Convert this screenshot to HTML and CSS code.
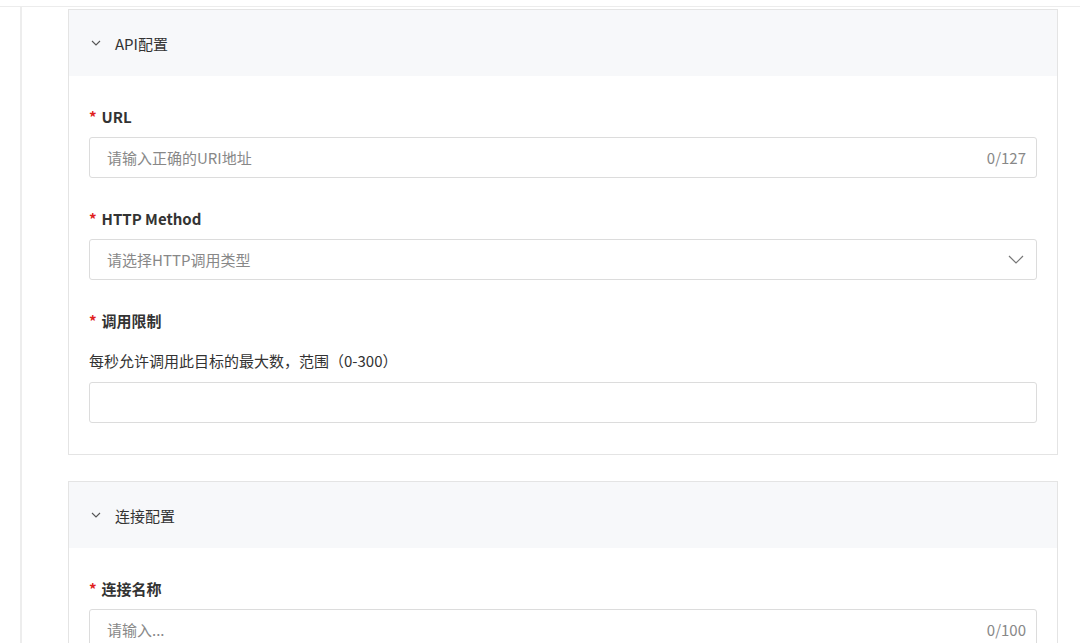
FILE: index.html
```html
<!DOCTYPE html>
<html lang="zh-CN">
<head>
    <meta charset="UTF-8">
    <meta name="viewport" content="width=device-width, initial-scale=1.0">
    <title>API配置</title>
    <link rel="stylesheet" href="styles.css">
</head>
<body>
    <div class="page">
        <div class="side"></div>
        <div class="main">
            <!-- API配置 -->
            <div class="panel">
                <div class="panel-head">
                    <svg class="fold" width="10" height="6" viewBox="0 0 10 6"><path d="M1 1l4 4 4-4" fill="none" stroke="#555" stroke-width="1.1"/></svg>
                    <span>API配置</span>
                </div>
                <div class="panel-body">
                    <div class="field">
                        <label class="label"><i>*</i>URL</label>
                        <div class="input">
                            <span class="placeholder">请输入正确的URI地址</span>
                            <span class="count">0/127</span>
                        </div>
                    </div>
                    <div class="field">
                        <label class="label"><i>*</i>HTTP Method</label>
                        <div class="input">
                            <span class="placeholder">请选择HTTP调用类型</span>
                            <svg class="arrow" width="16" height="9" viewBox="0 0 16 9"><path d="M1 1l7 7 7-7" fill="none" stroke="#777" stroke-width="1.2"/></svg>
                        </div>
                    </div>
                    <div class="field">
                        <label class="label"><i>*</i>调用限制</label>
                        <p class="help">每秒允许调用此目标的最大数，范围（0-300）</p>
                        <div class="input"></div>
                    </div>
                </div>
            </div>

            <!-- 连接配置 -->
            <div class="panel">
                <div class="panel-head">
                    <svg class="fold" width="10" height="6" viewBox="0 0 10 6"><path d="M1 1l4 4 4-4" fill="none" stroke="#555" stroke-width="1.1"/></svg>
                    <span>连接配置</span>
                </div>
                <div class="panel-body">
                    <div class="field">
                        <label class="label"><i>*</i>连接名称</label>
                        <div class="input">
                            <span class="placeholder">请输入...</span>
                            <span class="count">0/100</span>
                        </div>
                    </div>
                </div>
            </div>
        </div>
    </div>
</body>
</html>
```

FILE: styles.css
```css
* {
    margin: 0;
    padding: 0;
    box-sizing: border-box;
}

body {
    font-family: "Noto Sans CJK SC", "Noto Sans", sans-serif;
    font-size: 15px;
    color: #333;
    background-color: #fff;
    overflow: hidden;
}

.page {
    margin-top: 6px;
    border-top: 1px solid #ececec;
    display: flex;
    height: 637px;
    overflow: hidden;
}

.side {
    width: 22px;
    border-right: 2px solid #ededed;
}

.main {
    flex: 1;
    padding: 2px 22px 0 46px;
}

.panel {
    border: 1px solid #e4e4e4;
    margin-bottom: 26px;
}

.panel-head {
    height: 66px;
    background-color: #f7f8fa;
    display: flex;
    align-items: center;
    padding-left: 22px;
    font-size: 15px;
    color: #333;
}

.fold {
    margin-right: 14px;
}

.panel-body {
    padding: 31px 20px 0 20px;
}

.field {
    margin-bottom: 31px;
}

.label {
    display: block;
    line-height: 20px;
    font-weight: bold;
    font-size: 15px;
    color: #333;
    margin-bottom: 10px;
}

.label i {
    font-style: normal;
    color: #e02020;
    margin-right: 5px;
}

.help {
    line-height: 20px;
    margin: 20px 0 11px;
    color: #333;
}

.input {
    height: 41px;
    border: 1px solid #dcdcdc;
    border-radius: 3px;
    display: flex;
    align-items: center;
    justify-content: space-between;
    padding: 0 10px 0 17px;
}

.placeholder {
    color: #888;
}

.count {
    color: #888;
}

.arrow {
    margin-right: 2px;
}
```
